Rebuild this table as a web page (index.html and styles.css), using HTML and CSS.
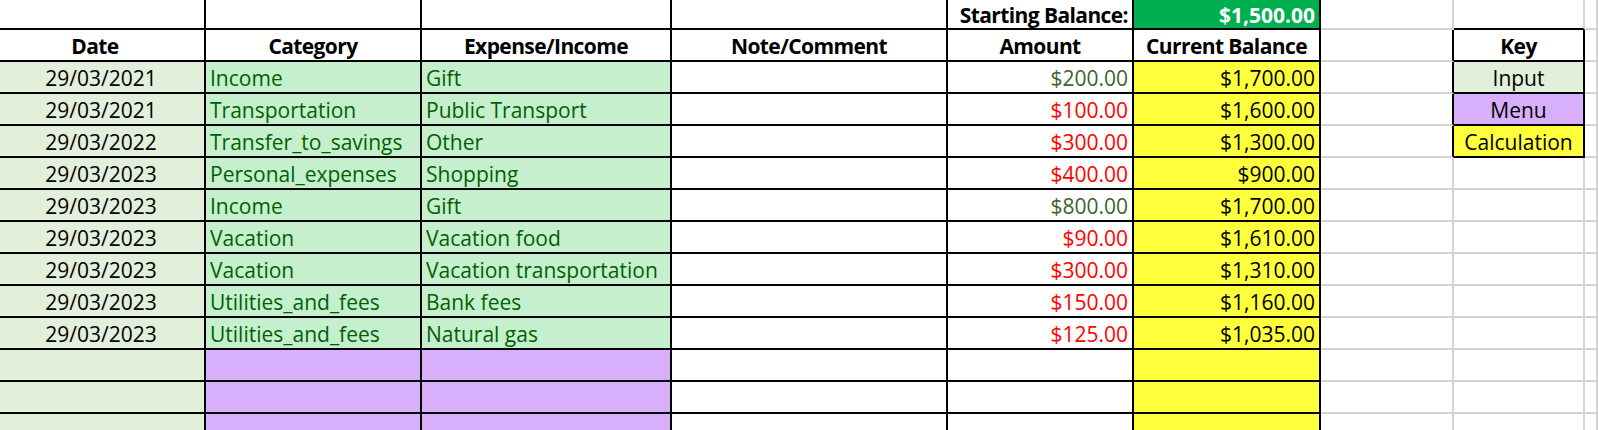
FILE: index.html
```html
<!DOCTYPE html>
<html>
<head>
<meta charset="utf-8">
<link rel="stylesheet" href="styles.css">
</head>
<body>
<div class="sheet">
  <!-- row 1 -->
  <div class="c"></div>
  <div class="c"></div>
  <div class="c"></div>
  <div class="c"></div>
  <div class="c b hd r">Starting Balance:</div>
  <div class="c b r start">$1,500.00</div>
  <div class="c g"></div>
  <div class="c g key-top"></div>
  <div class="c g"></div>

  <!-- row 2 header -->
  <div class="c b hd ctr date-h">Date</div>
  <div class="c b hd ctr">Category</div>
  <div class="c b hd ctr">Expense/Income</div>
  <div class="c b hd ctr">Note/Comment</div>
  <div class="c b hd ctr">Amount</div>
  <div class="c b hd ctr">Current Balance</div>
  <div class="c g kl"></div>
  <div class="c b hd ctr">Key</div>
  <div class="c g"></div>

  <!-- data rows -->
  <div class="c inp date">29/03/2021</div>
  <div class="c good">Income</div>
  <div class="c good">Gift</div>
  <div class="c"></div>
  <div class="c r pos">$200.00</div>
  <div class="c r calc">$1,700.00</div>
  <div class="c g kl"></div>
  <div class="c ctr inp">Input</div>
  <div class="c g"></div>

  <div class="c inp date">29/03/2021</div>
  <div class="c good">Transportation</div>
  <div class="c good">Public Transport</div>
  <div class="c"></div>
  <div class="c r neg">$100.00</div>
  <div class="c r calc">$1,600.00</div>
  <div class="c g kl"></div>
  <div class="c ctr menu">Menu</div>
  <div class="c g"></div>

  <div class="c inp date">29/03/2022</div>
  <div class="c good">Transfer_to_savings</div>
  <div class="c good">Other</div>
  <div class="c"></div>
  <div class="c r neg">$300.00</div>
  <div class="c r calc">$1,300.00</div>
  <div class="c g kl"></div>
  <div class="c ctr calc">Calculation</div>
  <div class="c g"></div>

  <div class="c inp date">29/03/2023</div>
  <div class="c good">Personal_expenses</div>
  <div class="c good">Shopping</div>
  <div class="c"></div>
  <div class="c r neg">$400.00</div>
  <div class="c r calc">$900.00</div>
  <div class="c g"></div>
  <div class="c g"></div>
  <div class="c g"></div>

  <div class="c inp date">29/03/2023</div>
  <div class="c good">Income</div>
  <div class="c good">Gift</div>
  <div class="c"></div>
  <div class="c r pos">$800.00</div>
  <div class="c r calc">$1,700.00</div>
  <div class="c g"></div>
  <div class="c g"></div>
  <div class="c g"></div>

  <div class="c inp date">29/03/2023</div>
  <div class="c good">Vacation</div>
  <div class="c good">Vacation food</div>
  <div class="c"></div>
  <div class="c r neg">$90.00</div>
  <div class="c r calc">$1,610.00</div>
  <div class="c g"></div>
  <div class="c g"></div>
  <div class="c g"></div>

  <div class="c inp date">29/03/2023</div>
  <div class="c good">Vacation</div>
  <div class="c good">Vacation transportation</div>
  <div class="c"></div>
  <div class="c r neg">$300.00</div>
  <div class="c r calc">$1,310.00</div>
  <div class="c g"></div>
  <div class="c g"></div>
  <div class="c g"></div>

  <div class="c inp date">29/03/2023</div>
  <div class="c good">Utilities_and_fees</div>
  <div class="c good">Bank fees</div>
  <div class="c"></div>
  <div class="c r neg">$150.00</div>
  <div class="c r calc">$1,160.00</div>
  <div class="c g"></div>
  <div class="c g"></div>
  <div class="c g"></div>

  <div class="c inp date">29/03/2023</div>
  <div class="c good">Utilities_and_fees</div>
  <div class="c good">Natural gas</div>
  <div class="c"></div>
  <div class="c r neg">$125.00</div>
  <div class="c r calc">$1,035.00</div>
  <div class="c g"></div>
  <div class="c g"></div>
  <div class="c g"></div>

  <!-- empty rows -->
  <div class="c inp"></div>
  <div class="c menu"></div>
  <div class="c menu"></div>
  <div class="c"></div>
  <div class="c"></div>
  <div class="c calc"></div>
  <div class="c g"></div>
  <div class="c g"></div>
  <div class="c g"></div>

  <div class="c inp"></div>
  <div class="c menu"></div>
  <div class="c menu"></div>
  <div class="c"></div>
  <div class="c"></div>
  <div class="c calc"></div>
  <div class="c g"></div>
  <div class="c g"></div>
  <div class="c g"></div>

  <div class="c inp"></div>
  <div class="c menu"></div>
  <div class="c menu"></div>
  <div class="c"></div>
  <div class="c"></div>
  <div class="c calc"></div>
  <div class="c g"></div>
  <div class="c g"></div>
  <div class="c g"></div>
</div>
</body>
</html>
```

FILE: styles.css
```css
html, body {
  margin: 0;
  padding: 0;
  background: #ffffff;
  overflow: hidden;
}

.sheet {
  display: grid;
  grid-template-columns: 206px 216px 250px 276px 186px 187px 133px 131px 13px;
  grid-template-rows: 30px repeat(13, 32px);
  width: 1598px;
  font-family: "Open Sans", "Liberation Sans", sans-serif;
  font-size: 21px;
  color: #000;
}

.c {
  box-sizing: border-box;
  border-right: 2px solid #000;
  border-bottom: 2px solid #000;
  display: flex;
  align-items: center;
  padding: 2px 4px 0 4px;
  line-height: 28px;
  white-space: nowrap;
  overflow: hidden;
}

.g {
  border-right-color: #d4d4d4;
  border-bottom-color: #d4d4d4;
}

.kl {
  border-right-color: #000;
}

.key-top {
  border-bottom-color: #000;
}

.b { font-weight: 700; }
.hd { letter-spacing: -0.6px; }
.r { justify-content: flex-end; }
.ctr { justify-content: center; }

.start {
  background: #00b050;
  color: #ffffff;
}

.date-h { padding-right: 18px; }
.date { justify-content: center; padding-right: 6px; }

.inp { background: #e2efda; }
.good { background: #c6efce; color: #006100; }
.menu { background: #d7affb; }
.calc { background: #ffff3c; }
.pos { color: #3d6330; }
.neg { color: #ff0000; }
```
